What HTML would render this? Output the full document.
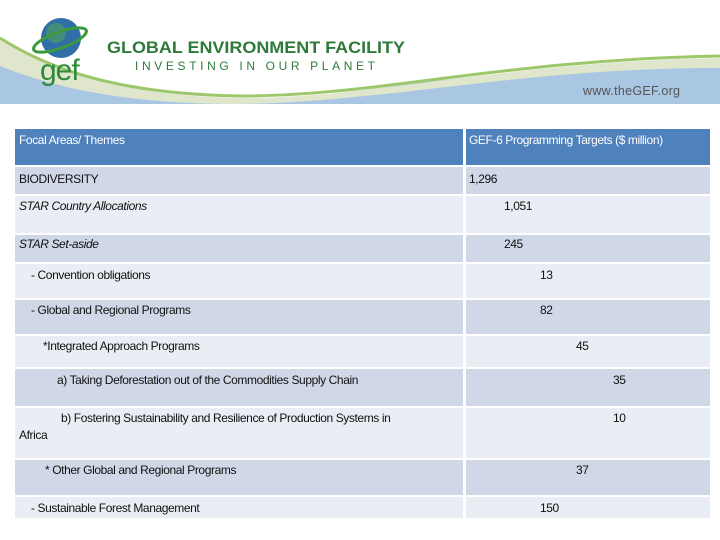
<!DOCTYPE html>
<html><head><style>
body{margin:0;width:720px;height:540px;background:#fff;position:relative;overflow:hidden;font-family:"Liberation Sans",sans-serif;}
.r{position:absolute;left:15px;width:695px;}
.c{position:absolute;top:0;bottom:0;}
.l{left:0;width:448px;}
.v{left:451px;right:0;}
.t{position:absolute;font-size:12px;color:#111;letter-spacing:-0.4px;white-space:nowrap;}
.d .c{background:#d0d8e8;}
.w .c{background:#e9edf4;}
.h .c{background:#4f81bd;}
.h .t{color:#fff;}
</style></head><body>
<svg width="720" height="105" style="position:absolute;left:0;top:0">
<path d="M0 62 C60 82 130 100 230 100 C360 100 480 62 720 64 L720 104 L0 104 Z" fill="#a9c6e3"/>
<path d="M0 40 C50 70 120 96 240 98 C380 98 500 62 720 58 L720 68 C520 68 390 102 240 104 C120 104 50 86 0 66 Z" fill="#dfe6cc"/>
<path d="M0 38 C50 70 120 94 240 96 C380 96 500 60 720 56" fill="none" stroke="#9cc76a" stroke-width="3"/>
<circle cx="61" cy="38" r="20" fill="#2f6ea6"/>
<circle cx="56" cy="33" r="10" fill="#4f9a6a" opacity="0.7"/>
<ellipse cx="60" cy="40" rx="28" ry="8" fill="none" stroke="#3c9a3c" stroke-width="3" transform="rotate(-20 60 40)"/>
<text x="40" y="80" font-family="Liberation Sans" font-size="30" fill="#2e8b3a" letter-spacing="-1">gef</text>
<text x="107" y="53" font-family="Liberation Sans" font-weight="bold" font-size="17" fill="#2f7a3a" textLength="298" lengthAdjust="spacingAndGlyphs">GLOBAL ENVIRONMENT FACILITY</text>
<text x="135" y="70" font-family="Liberation Sans" font-size="12" fill="#2f7a3a" textLength="240" lengthAdjust="spacing">INVESTING IN OUR PLANET</text>
<text x="583" y="95" font-family="Liberation Sans" font-size="12.5" fill="#555" textLength="97">www.theGEF.org</text>
</svg>
<div class="r h" style="top:129px;height:36px"><div class="c l"></div><div class="c v"></div><div class="t" style="left:4px;top:4px">Focal Areas/ Themes</div><div class="t" style="left:454px;top:4px">GEF-6 Programming Targets ($ million)</div></div>
<div class="r d" style="top:167px;height:27px"><div class="c l"></div><div class="c v"></div><div class="t" style="left:4px;top:5px">BIODIVERSITY</div><div class="t" style="left:454px;top:5px">1,296</div></div>
<div class="r w" style="top:196px;height:37px"><div class="c l"></div><div class="c v"></div><div class="t" style="left:4px;top:3px;font-style:italic">STAR Country Allocations</div><div class="t" style="left:489px;top:3px">1,051</div></div>
<div class="r d" style="top:235px;height:27px"><div class="c l"></div><div class="c v"></div><div class="t" style="left:4px;top:2px;font-style:italic">STAR Set-aside</div><div class="t" style="left:489px;top:2px">245</div></div>
<div class="r w" style="top:264px;height:34px"><div class="c l"></div><div class="c v"></div><div class="t" style="left:16px;top:4px">- Convention obligations</div><div class="t" style="left:525px;top:4px">13</div></div>
<div class="r d" style="top:300px;height:34px"><div class="c l"></div><div class="c v"></div><div class="t" style="left:16px;top:3px">- Global and Regional Programs</div><div class="t" style="left:525px;top:3px">82</div></div>
<div class="r w" style="top:336px;height:31px"><div class="c l"></div><div class="c v"></div><div class="t" style="left:28px;top:3px">*Integrated Approach Programs</div><div class="t" style="left:561px;top:3px">45</div></div>
<div class="r d" style="top:369px;height:37px"><div class="c l"></div><div class="c v"></div><div class="t" style="left:42px;top:4px">a) Taking Deforestation out of the Commodities Supply Chain</div><div class="t" style="left:598px;top:4px">35</div></div>
<div class="r w" style="top:408px;height:50px"><div class="c l"></div><div class="c v"></div><div class="t" style="left:46px;top:3px">b) Fostering Sustainability and Resilience of Production Systems in</div><div class="t" style="left:4px;top:20px">Africa</div><div class="t" style="left:598px;top:3px">10</div></div>
<div class="r d" style="top:460px;height:35px"><div class="c l"></div><div class="c v"></div><div class="t" style="left:30px;top:3px">* Other Global and Regional Programs</div><div class="t" style="left:561px;top:3px">37</div></div>
<div class="r w" style="top:497px;height:21px"><div class="c l"></div><div class="c v"></div><div class="t" style="left:16px;top:4px">- Sustainable Forest Management</div><div class="t" style="left:525px;top:4px">150</div></div>
</body></html>
